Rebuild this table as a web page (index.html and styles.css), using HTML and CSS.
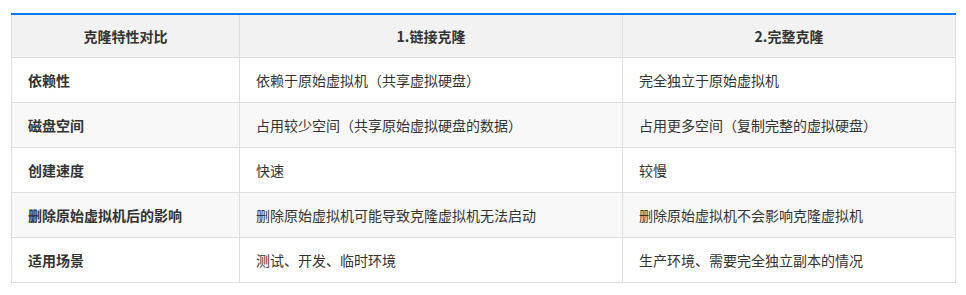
FILE: index.html
```html
<!DOCTYPE html>
<html lang="zh-CN">
<head>
<meta charset="utf-8">
<link rel="stylesheet" href="styles.css">
</head>
<body>
<div class="wrap">
<table class="cmp">
  <colgroup>
    <col class="c1">
    <col class="c2">
    <col class="c3">
  </colgroup>
  <thead>
    <tr><th>克隆特性对比</th><th>1.链接克隆</th><th>2.完整克隆</th></tr>
  </thead>
  <tbody>
    <tr><td class="key">依赖性</td><td>依赖于原始虚拟机（共享虚拟硬盘）</td><td>完全独立于原始虚拟机</td></tr>
    <tr class="alt"><td class="key">磁盘空间</td><td>占用较少空间（共享原始虚拟硬盘的数据）</td><td>占用更多空间（复制完整的虚拟硬盘）</td></tr>
    <tr><td class="key">创建速度</td><td>快速</td><td>较慢</td></tr>
    <tr class="alt"><td class="key">删除原始虚拟机后的影响</td><td>删除原始虚拟机可能导致克隆虚拟机无法启动</td><td>删除原始虚拟机不会影响克隆虚拟机</td></tr>
    <tr><td class="key">适用场景</td><td>测试、开发、临时环境</td><td>生产环境、需要完全独立副本的情况</td></tr>
  </tbody>
</table>
</div>
</body>
</html>
```

FILE: styles.css
```css
html, body {
  margin: 0;
  padding: 0;
  background: #ffffff;
}
.wrap {
  padding: 13px 11px;
}
.cmp {
  width: 944px;
  border-collapse: collapse;
  table-layout: fixed;
  font-family: "Noto Sans CJK SC", "Noto Sans", sans-serif;
  font-size: 14px;
  color: #333333;
}
.c1 { width: 228px; }
.c2 { width: 383px; }
.c3 { width: 333px; }
.cmp th {
  background: #f2f2f2;
  font-weight: 600;
  text-align: center;
  height: 42px;
  padding: 0 16px;
  border-left: 1px solid #dddddd;
  border-right: 1px solid #dddddd;
  border-bottom: 1px solid #dddddd;
  border-top: 2px solid #0a78ee;
}
.cmp td {
  height: 44px;
  padding: 0 16px;
  border: 1px solid #dddddd;
  text-align: left;
  vertical-align: middle;
}
.cmp .alt td {
  background: #f8f8f8;
}
.cmp td.key {
  font-weight: 700;
}
```
